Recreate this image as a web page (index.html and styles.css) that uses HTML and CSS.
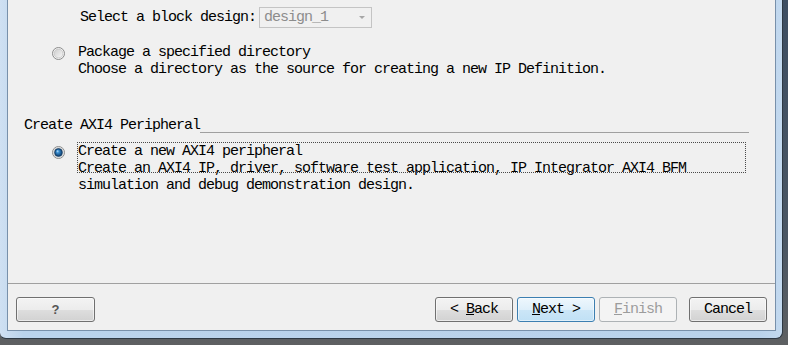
FILE: index.html
```html
<!DOCTYPE html>
<html>
<head>
<meta charset="utf-8">
<link rel="stylesheet" href="styles.css">
</head>
<body>
<div class="desktop">
  <div class="frame">
    <div class="content">
      <div class="main">
        <div class="select-row">
          <span class="label">Select a block design:</span>
          <div class="combo"><span class="combo-text">design_1</span><span class="combo-arrow"></span></div>
        </div>

        <div class="option first">
          <svg class="radio" width="13" height="13" viewBox="0 0 13 13">
            <defs>
              <linearGradient id="rg1" x1="0" y1="0" x2="1" y2="1">
                <stop offset="0" stop-color="#cdcdcd"/>
                <stop offset="1" stop-color="#f8f8f8"/>
              </linearGradient>
            </defs>
            <circle cx="6.5" cy="6.5" r="6" fill="#f4f4f4" stroke="#8a8b8b"/>
            <circle cx="6.5" cy="6.5" r="4.4" fill="url(#rg1)" stroke="#c4c4c4" stroke-width="0.8"/>
          </svg>
          <div class="opt-text">
            <div>Package a specified directory</div>
            <div>Choose a directory as the source for creating a new IP Definition.</div>
          </div>
        </div>

        <div class="section">
          <span class="section-title">Create AXI4 Peripheral</span>
          <span class="section-line"></span>
        </div>

        <div class="option second">
          <svg class="radio" width="13" height="13" viewBox="0 0 13 13">
            <defs>
              <linearGradient id="rg2" x1="0" y1="0" x2="1" y2="1">
                <stop offset="0" stop-color="#d2d2d2"/>
                <stop offset="1" stop-color="#fafafa"/>
              </linearGradient>
              <radialGradient id="dot2" cx="0.5" cy="0.5" r="0.5" fx="0.35" fy="0.3">
                <stop offset="0" stop-color="#c4e8fd"/>
                <stop offset="0.35" stop-color="#3a8fd2"/>
                <stop offset="1" stop-color="#0a3866"/>
              </radialGradient>
            </defs>
            <circle cx="6.5" cy="6.5" r="6" fill="#f4f4f4" stroke="#8a8b8b"/>
            <circle cx="6.5" cy="6.5" r="4.8" fill="url(#rg2)" stroke="#c4c4c4" stroke-width="0.8"/>
            <circle cx="6.5" cy="6.5" r="3.9" fill="url(#dot2)" stroke="#173f66" stroke-width="0.7"/>
          </svg>
          <div class="opt-text">
            <div>Create a new AXI4 peripheral</div>
            <div>Create an AXI4 IP, driver, software test application, IP Integrator AXI4 BFM</div>
            <div>simulation and debug demonstration design.</div>
            <span class="focus"></span>
          </div>
        </div>
      </div>

      <div class="footer">
        <button class="btn help"><span>?</span></button>
        <div class="nav">
          <button class="btn"><span>&lt; <span class="mn">B</span>ack</span></button>
          <button class="btn default"><span><span class="mn">N</span>ext &gt;</span></button>
          <button class="btn disabled"><span><span class="mn">F</span>inish</span></button>
          <button class="btn cancel"><span>Cancel</span></button>
        </div>
      </div>
    </div>
  </div>
</div>
</body>
</html>
```
FILE: styles.css
```css
html, body {
  margin: 0;
  padding: 0;
}

body {
  width: 788px;
  height: 345px;
  overflow: hidden;
  font-family: "Liberation Mono", "DejaVu Sans Mono", monospace;
  font-size: 15px;
  letter-spacing: -1px;
  color: #000;
}

.desktop {
  width: 788px;
  height: 345px;
  background: linear-gradient(to bottom, #3d4e62 0%, #4a5663 70%, #5e6062 100%);
}

.frame {
  width: 783px;
  height: 339px;
  box-sizing: border-box;
  display: flex;
  padding: 0 6px 7px 7px;
  background: linear-gradient(to right, #cfe0f2 0%, #bad3ec 3%, #b9d2eb 97%, #c3d9ef 100%);
  border-right: 1px solid #2e3944;
  border-bottom: 1px solid #2e3944;
  border-bottom-right-radius: 7px;
  border-bottom-left-radius: 6px;
}

.content {
  flex: 1;
  display: flex;
  flex-direction: column;
  background: #f0f0f0;
  border: 1px solid #7890aa;
  border-top: 0;
}

.main {
  flex: 1;
  padding-top: 7px;
}

.select-row {
  display: flex;
  align-items: center;
  height: 21px;
  padding-left: 72px;
  line-height: 17px;
}

.combo {
  margin-left: 3px;
  width: 113px;
  height: 21px;
  box-sizing: border-box;
  border: 1px solid #c4c4c4;
  background: #f0f0f0;
  display: flex;
  align-items: center;
  justify-content: space-between;
  padding: 0 6px 0 4px;
}

.combo-text {
  color: #8c8c8c;
}

.combo-arrow {
  width: 0;
  height: 0;
  border-left: 3px solid transparent;
  border-right: 3px solid transparent;
  border-top: 3px solid #a6a6a6;
}

.option {
  display: flex;
  align-items: flex-start;
  margin-left: 44px;
}

.option.first {
  margin-top: 16px;
}

.option.second {
  margin-top: 9px;
}

.radio {
  flex: none;
  margin-top: 3px;
}

.opt-text {
  position: relative;
  margin-left: 13px;
  line-height: 17px;
  white-space: nowrap;
}

.focus {
  position: absolute;
  left: -1px;
  top: -1px;
  width: 669px;
  height: 31px;
  box-sizing: border-box;
  border: 1px dotted #4a4a4a;
}

.section {
  display: flex;
  align-items: flex-start;
  margin: 39px 26px 0 16px;
  line-height: 17px;
}

.section-line {
  flex: 1;
  height: 1px;
  margin-top: 15px;
  background: #a0a0a0;
}

.footer {
  border-top: 1px solid #a0a0a0;
  padding: 13px 8px 8px;
  display: flex;
  justify-content: space-between;
}

.nav {
  display: flex;
  gap: 4px;
}

.btn {
  width: 78px;
  height: 25px;
  box-sizing: border-box;
  margin: 0;
  padding: 0;
  display: flex;
  align-items: center;
  justify-content: center;
  white-space: pre;
  font-family: "Liberation Mono", "DejaVu Sans Mono", monospace;
  font-size: 15px;
  letter-spacing: -1px;
  color: #000;
  border: 1px solid #707070;
  border-radius: 3px;
  background: linear-gradient(to bottom, #f3f3f3 0%, #ececec 50%, #dedede 51%, #d2d2d2 100%);
  box-shadow: inset 0 0 0 1px rgba(255, 255, 255, 0.55);
}

.btn.help {
  width: 79px;
  font-family: "Liberation Sans", Arial, sans-serif;
  font-weight: bold;
  font-size: 13px;
  letter-spacing: 0;
  color: #555;
}

.btn.default {
  border-color: #3c7fb1;
  background: linear-gradient(to bottom, #eef7fd 0%, #deeffa 50%, #cce6f7 51%, #c0e0f5 100%);
  box-shadow: inset 0 0 0 1px rgba(255, 255, 255, 0.5);
}

.btn.disabled {
  border-color: #adb2b5;
  background: #f4f4f4;
  color: #9c9c9c;
  box-shadow: none;
}

.btn.cancel {
  margin-left: 8px;
}

.mn {
  text-decoration: underline;
}
```
